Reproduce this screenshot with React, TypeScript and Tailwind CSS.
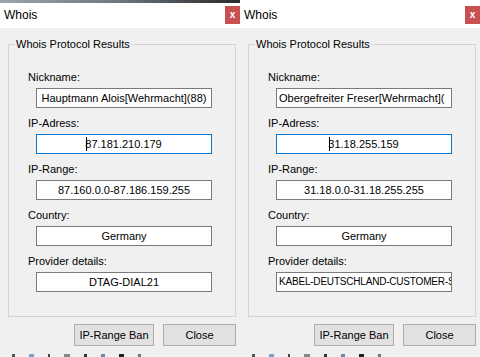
import React from 'react';

type Field = {
  label: string;
  value: string;
  focused?: boolean;
  overflow?: boolean;
  tight?: boolean;
};

const CloseButton = () => (
  <div className="flex h-[18px] w-[15px] items-center justify-center bg-[#c75050] text-[10px] font-bold leading-none text-white">
    x
  </div>
);

const InputBox = ({ value, focused, overflow, tight }: Field) => (
  <div
    className={
      focused
        ? 'ml-[27px] flex h-[20px] w-[176px] items-center justify-center overflow-hidden whitespace-nowrap border border-[#0078d7] bg-white'
        : overflow
        ? 'ml-[27px] flex h-[20px] w-[176px] items-center justify-start overflow-hidden whitespace-nowrap border border-[#7a7a7a] bg-white pl-[2px]'
        : 'ml-[27px] flex h-[20px] w-[176px] items-center justify-center overflow-hidden whitespace-nowrap border border-[#7a7a7a] bg-white'
    }>
    {focused && <span className="-mr-[2px] inline-block h-[14px] w-px bg-black" />}
    <span className={tight ? 'text-[10px] leading-[16px] tracking-[-0.2px]' : 'leading-[16px]'}>{value}</span>
  </div>
);

const WhoisWindow = ({ fields, desktopStrip }: { fields: Field[]; desktopStrip?: boolean }) => (
  <div
    className={
      desktopStrip
        ? 'flex h-full w-[240px] flex-col'
        : 'flex h-full w-[240px] flex-col shadow-[inset_1px_0_0_#8a8a8a]'
    }>
    {desktopStrip && <div className="h-[3px] bg-gradient-to-r from-[#9aa6b0] via-[#6d7780] to-[#2a2a2a]" />}

    {/* title bar */}
    <div
      className={
        desktopStrip
          ? 'flex h-[25px] items-start justify-between bg-white pl-[4px]'
          : 'flex h-[28px] items-start justify-between bg-white pl-[4px]'
      }>
      <span className={desktopStrip ? 'mt-[4px] text-[12px] leading-[16px]' : 'mt-[7px] text-[12px] leading-[16px]'}>
        Whois
      </span>
      <div className={desktopStrip ? 'mt-[3px]' : 'mt-[6px]'}>
        <CloseButton />
      </div>
    </div>

    <div className="flex flex-1 flex-col bg-[#f0f0f0] pt-[9px]">
      <fieldset className="ml-[8px] w-[228px] border border-[#d5d5d5] pb-[24px] pl-[6px]">
        <legend className="px-[1px] leading-[14px]">Whois Protocol Results</legend>
        <div className="-ml-[6px] flex flex-col pt-[18px]">
          {fields.map((f, i) => (
            <div key={f.label} className={i > 0 ? 'mt-[7px]' : ''}>
              <div className="ml-[19px] h-[16px] leading-[16px]">{f.label}</div>
              <div className="mt-[3px]">
                <InputBox {...f} />
              </div>
            </div>
          ))}
        </div>
      </fieldset>

      <div className="mt-[7px] flex justify-end gap-[9px] pr-[4px]">
        <button className="h-[22px] w-[80px] border border-[#adadad] bg-[#e1e1e1] leading-[16px]">IP-Range Ban</button>
        <button className="h-[22px] w-[73px] border border-[#adadad] bg-[#e1e1e1] leading-[16px]">Close</button>
      </div>
    </div>

    {/* bit of the desktop below */}
    <div className="flex h-[4px] gap-[14px] bg-[#f0f0f0] pl-[12px] pt-[1px]">
      <span className="w-[3px] bg-[#555]" />
      <span className="w-[5px] bg-[#7aa0c0]" />
      <span className="w-[2px] bg-[#444]" />
      <span className="w-[6px] bg-[#888]" />
      <span className="w-[3px] bg-[#333]" />
      <span className="w-[4px] bg-[#6a8aa8]" />
      <span className="w-[5px] bg-[#222]" />
      <span className="w-[3px] bg-[#777]" />
    </div>
  </div>
);

export default function App() {
  const left: Field[] = [
    { label: 'Nickname:', value: 'Hauptmann Alois[Wehrmacht](88)' },
    { label: 'IP-Adress:', value: '87.181.210.179', focused: true },
    { label: 'IP-Range:', value: '87.160.0.0-87.186.159.255' },
    { label: 'Country:', value: 'Germany' },
    { label: 'Provider details:', value: 'DTAG-DIAL21' },
  ];
  const right: Field[] = [
    { label: 'Nickname:', value: 'Obergefreiter Freser[Wehrmacht](', overflow: true },
    { label: 'IP-Adress:', value: '31.18.255.159', focused: true },
    { label: 'IP-Range:', value: '31.18.0.0-31.18.255.255' },
    { label: 'Country:', value: 'Germany' },
    { label: 'Provider details:', value: 'KABEL-DEUTSCHLAND-CUSTOMER-S', overflow: true, tight: true },
  ];

  return (
    <div className="flex h-[357px] w-[480px] overflow-hidden bg-[#f0f0f0] font-['Liberation_Sans',Arial,sans-serif] text-[11px] text-black">
      <WhoisWindow fields={left} desktopStrip />
      <WhoisWindow fields={right} />
    </div>
  );
}
